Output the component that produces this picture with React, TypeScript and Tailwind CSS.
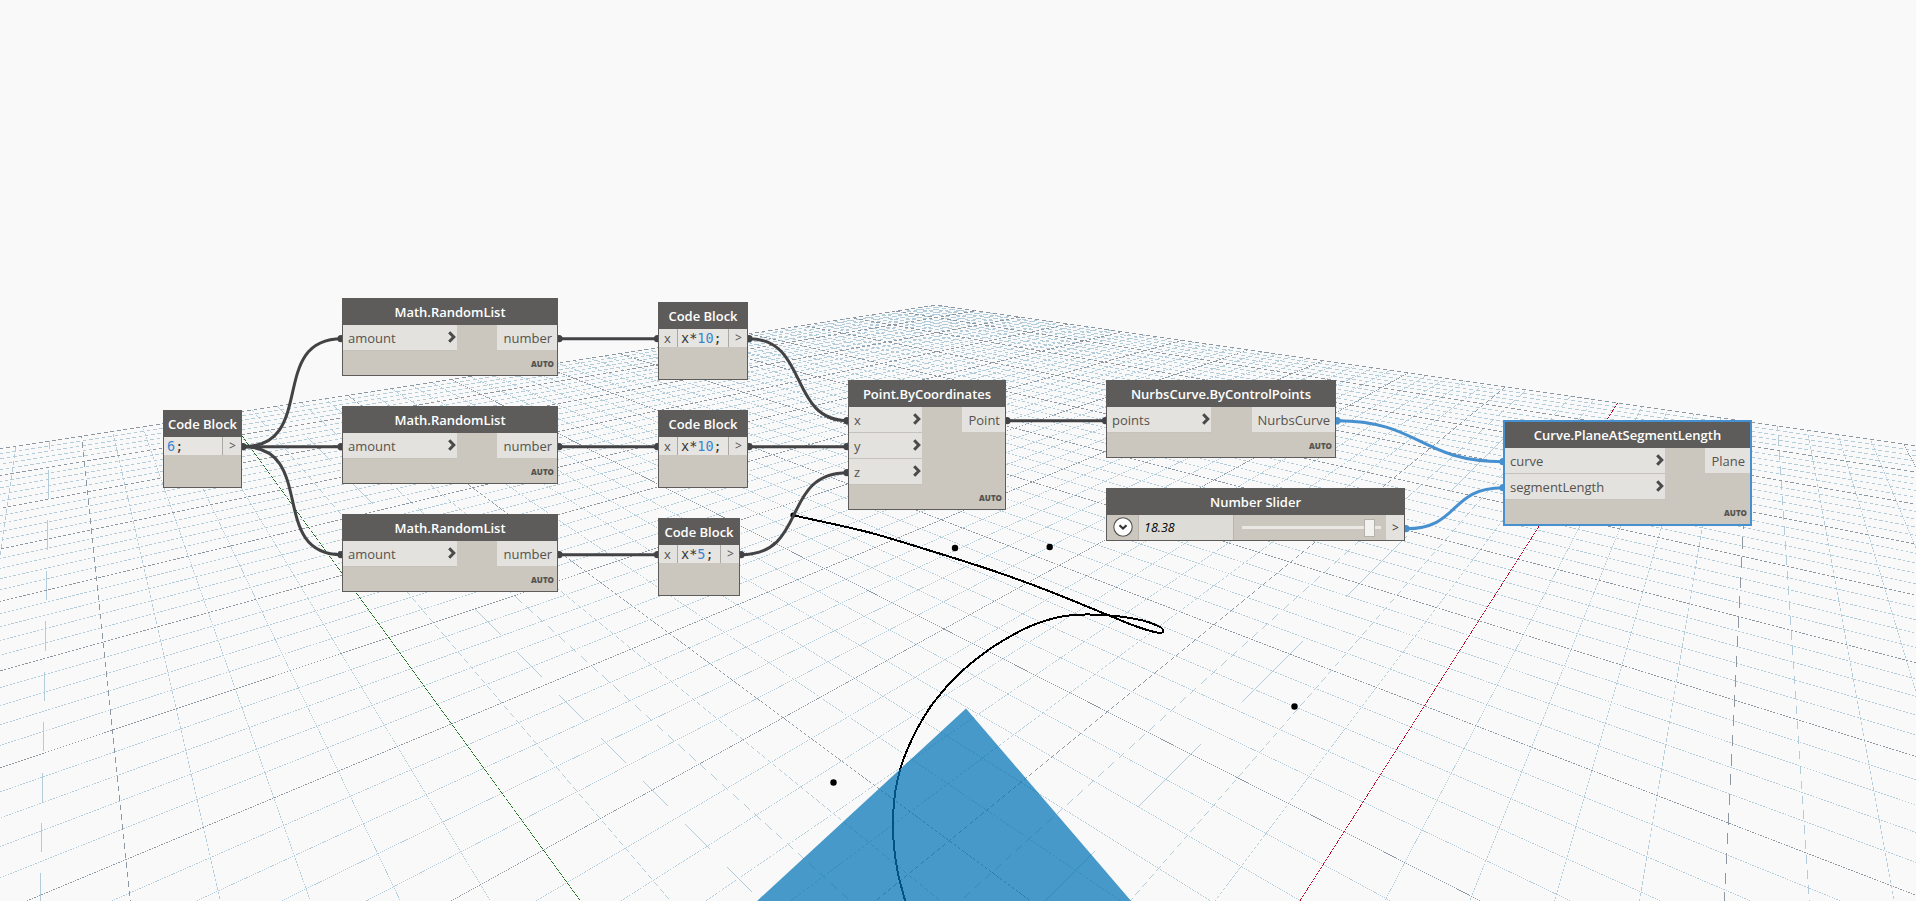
import type { ReactNode } from "react";

type Vec = [number, number, number];

// Homogeneous screen coordinates of the far grid corner and the two vanishing points.
const CORNER: Vec = [936, 305, 1];
const VANISH_A: Vec = [54.6, 178.3, 1];
const VANISH_B: Vec = [1761, 178.3, 1];
const STEP_A = 0.4361 / 50;
const STEP_B = 0.4625 / 50;
const CELLS = 100;

function weight(s: number, t: number) {
  return 1 - s * STEP_A - t * STEP_B;
}

function project(s: number, t: number): [number, number] {
  const w = weight(s, t);
  const axis = (i: number) => (CORNER[i] - s * STEP_A * VANISH_A[i] - t * STEP_B * VANISH_B[i]) / w;
  return [axis(0), axis(1)];
}

// A grid line as a sliver narrower than a pixel, so that it rasterises into dashes.
function gridLine(index: number, alongS: boolean, thickness = 0.58): string {
  const at = (k: number): [number, number] => (alongS ? [k, index] : [index, k]);
  const [s0, t0] = at(0);
  if (weight(s0, t0) < 0.06) return "";
  const step = alongS ? STEP_A : STEP_B;
  const end = Math.min(CELLS, (weight(s0, t0) - 0.05) / step);
  const [s1, t1] = at(end);
  const [x0, y0] = project(s0, t0);
  const [x1, y1] = project(s1, t1);
  const h = thickness / 2;
  const steep = Math.abs(y1 - y0) > Math.abs(x1 - x0);
  // The offset keeps every sliver wound the same way.
  const dx = steep ? (y1 > y0 ? h : -h) : 0;
  const dy = steep ? 0 : x1 > x0 ? -h : h;
  const p = (x: number, y: number) => `${x.toFixed(3)} ${y.toFixed(3)}`;
  return `M${p(x0 + dx, y0 + dy)}L${p(x1 + dx, y1 + dy)}L${p(x1 - dx, y1 - dy)}L${p(x0 - dx, y0 - dy)}Z`;
}

const indexes = Array.from({ length: CELLS + 1 }, (_, i) => i);
const minor = indexes.filter((i) => i % 5 !== 0);
const major = indexes.filter((i) => i % 5 === 0 && i !== 50);
const lines = (list: number[]) => list.map((i) => gridLine(i, true) + gridLine(i, false)).join("");

const CURVE: [number, number][] = [
  [792, 515], [868.6, 532.3], [925.7, 549.3], [991, 570], [1048, 590.7], [1109, 615.5], [1138, 627], [1158, 632.7],
  [1163.5, 630.8], [1158, 626], [1142, 620.3], [1113.5, 615.8], [1085, 614.5], [1060, 616.8], [1032, 625.5],
  [1011, 636], [987, 651], [958.4, 674.5], [934, 702], [917.6, 728], [905.8, 753.3], [900, 770], [895, 793.3],
  [893, 820], [894, 846.7], [898, 873.3], [905.5, 902],
];

function smooth(points: [number, number][]): string {
  let d = `M${points[0][0]} ${points[0][1]}`;
  for (let i = 0; i < points.length - 1; i++) {
    const a = points[Math.max(0, i - 1)];
    const b = points[i];
    const c = points[i + 1];
    const e = points[Math.min(points.length - 1, i + 2)];
    // Limit the tangents to a third of the span they belong to.
    const span = Math.hypot(c[0] - b[0], c[1] - b[1]);
    const tb = Math.hypot(c[0] - a[0], c[1] - a[1]) || 1;
    const tc = Math.hypot(e[0] - b[0], e[1] - b[1]) || 1;
    const k = span / 3;
    d += `C${b[0] + ((c[0] - a[0]) / tb) * k} ${b[1] + ((c[1] - a[1]) / tb) * k} ${c[0] - ((e[0] - b[0]) / tc) * k} ${c[1] - ((e[1] - b[1]) / tc) * k} ${c[0]} ${c[1]}`;
  }
  return d;
}

function Viewport() {
  return (
    <svg className="absolute inset-0 block" width="1916" height="901" viewBox="0 0 1916 901" fill="none">
      <g shapeRendering="crispEdges">
        <path d={lines(minor)} fill="#b3ccda" />
        <path d={lines(major)} fill="#8d97a2" />
        <path d={gridLine(50, true, 0.7)} fill="#166b16" />
        <path d={gridLine(50, false, 0.7)} fill="#b8001f" />
      </g>
      <path shapeRendering="crispEdges" d={smooth(CURVE)} stroke="#000" strokeWidth="2" />
      <g fill="#000">
        <circle cx="793" cy="515" r="2.6" />
        <circle cx="955" cy="548" r="3.2" />
        <circle cx="1049.700" cy="547" r="3.2" />
        <circle cx="1294.500" cy="706.500" r="3.2" />
        <circle cx="833.500" cy="782.500" r="3.2" />
      </g>
      <path d="M966 708.500L1131.500 901.500H756.500Z" fill="#0073b5" fillOpacity="0.72" />
    </svg>
  );
}

function Wires() {
  return (
    <svg className="absolute inset-0 block" width="1916" height="901" viewBox="0 0 1916 901" fill="none">
      <g stroke="#434345" strokeWidth="3">
        <path d="M243 446.700C318 446.700 267 338.700 342 338.700" />
        <path d="M243 446.700H342" />
        <path d="M243 446.700C318 446.700 267 554.700 342 554.700" />
        <path d="M559 338.700H658M559 446.700H658M559 554.700H658" />
        <path d="M749 338.700C809 338.700 788 420.700 848 420.700" />
        <path d="M749 446.700H848" />
        <path d="M741 554.700C809 554.700 780 472.700 848 472.700" />
        <path d="M1007 420.700H1106" />
      </g>
      <g stroke="#4690d0" strokeWidth="3">
        <path d="M1337 420.700C1420 420.700 1420 461.700 1503 461.700" />
        <path d="M1406 528.700C1460 528.700 1449 487.700 1503 487.700" />
      </g>
      <g fill="#434345">
        {[
          [243, 446.7], [341, 338.7], [341, 446.7], [341, 554.7], [559, 338.7], [559, 446.7], [559, 554.7],
          [657.5, 338.7], [657.5, 446.7], [657.5, 554.7], [749, 338.7], [749, 446.7], [741, 554.7],
          [847, 420.7], [847, 446.7], [847, 472.7], [1007, 420.7], [1105.5, 420.7],
        ].map(([x, y]) => (
          <circle key={`${x}-${y}`} cx={x} cy={y} r="3.6" />
        ))}
      </g>
      <g fill="#4690d0">
        <circle cx="1337" cy="420.700" r="3.600" />
        <circle cx="1406" cy="528.700" r="3.600" />
        <circle cx="1503" cy="461.700" r="3.600" />
        <circle cx="1503" cy="487.700" r="3.600" />
      </g>
    </svg>
  );
}

function Node({ title, className, children, selected = false }: { title: string; className: string; children: ReactNode; selected?: boolean }) {
  return (
    <section
      className={`absolute flex flex-col bg-[#cbc6be] ${selected ? "border-2 border-[#4690d0]" : "border border-[#5e5c5a]"} ${className}`}
    >
      <h2 className="flex h-[26px] shrink-0 items-center justify-center bg-[#5e5c5a] pt-px text-[13px] leading-none font-semibold whitespace-nowrap text-white">
        {title}
      </h2>
      {children}
    </section>
  );
}

function Chevron() {
  return (
    <svg className="mt-[-2px] block" width="8" height="12" viewBox="0 0 8 12" fill="none">
      <path d="M1.200 1.200L5.800 6L1.200 10.800" stroke="#4a4a4a" strokeWidth="3" />
    </svg>
  );
}

function Auto() {
  return <div className="pr-[3px] text-right text-[8px] leading-[10px] font-extrabold text-[#55534f]">AUTO</div>;
}

function Ports({ inputs, output, className }: { inputs: string[]; output: string; className: string }) {
  return (
    <div className="flex flex-1 items-start justify-between text-[13px] leading-[27px] text-[#55534f]">
      <div className={`flex flex-col gap-px ${className}`}>
        {inputs.map((name) => (
          <div key={name} className="flex h-[25px] items-center justify-between bg-[#e4e2de] pr-px pl-[5px] shadow-[0_1px_0_#c5c2bc]">
            <span className="h-[25px]">{name}</span>
            <Chevron />
          </div>
        ))}
      </div>
      <div className="h-[25px] bg-[#e4e2de] pr-[5px] pl-[6px]">{output}</div>
    </div>
  );
}

function FunctionNode({ title, className, inputs, output, portWidth, selected }: { title: string; className: string; inputs: string[]; output: string; portWidth: string; selected?: boolean }) {
  return (
    <Node title={title} className={`pb-[6px] ${className}`} selected={selected}>
      <Ports inputs={inputs} output={output} className={portWidth} />
      <Auto />
    </Node>
  );
}

function CodeBlock({ className, input, before, value }: { className: string; input?: string; before?: string; value: string }) {
  return (
    <Node title="Code Block" className={className}>
      <div className="flex h-[18px] bg-[#e4e2de] text-[13px] leading-[19px] text-[#55534f]">
        {input && <div className="w-[19px] shrink-0 border-r border-[#aaa8a4] pl-[5px]">{input}</div>}
        <div className="flex-1 bg-[#e7e5e2] pl-[3px] font-['DejaVu_Sans_Mono',monospace] text-[13.5px] leading-[19px] text-[#333]">
          {before}
          <span className="text-[#3a86d0]">{value}</span>;
        </div>
        <div className="w-[19px] shrink-0 border-l border-[#aaa8a4] pl-[6px] text-[12px] leading-[18px]">&gt;</div>
      </div>
    </Node>
  );
}

export default function App() {
  return (
    <main className="relative h-[901px] w-[1916px] overflow-hidden bg-[#f9f9f9] font-['Open_Sans','Noto_Sans',sans-serif]">
      <Viewport />
      <Wires />

      <CodeBlock className="top-[410px] left-[163px] h-[78px] w-[79px]" value="6" />
      <FunctionNode title="Math.RandomList" className="top-[298px] left-[342px] h-[78px] w-[216px]" inputs={["amount"]} output="number" portWidth="w-[114px]" />
      <FunctionNode title="Math.RandomList" className="top-[406px] left-[342px] h-[78px] w-[216px]" inputs={["amount"]} output="number" portWidth="w-[114px]" />
      <FunctionNode title="Math.RandomList" className="top-[514px] left-[342px] h-[78px] w-[216px]" inputs={["amount"]} output="number" portWidth="w-[114px]" />

      <CodeBlock className="top-[302px] left-[658px] h-[78px] w-[90px]" input="x" before="x*" value="10" />
      <CodeBlock className="top-[410px] left-[658px] h-[78px] w-[90px]" input="x" before="x*" value="10" />
      <CodeBlock className="top-[518px] left-[658px] h-[78px] w-[82px]" input="x" before="x*" value="5" />

      <FunctionNode title="Point.ByCoordinates" className="top-[380px] left-[848px] h-[130px] w-[158px]" inputs={["x", "y", "z"]} output="Point" portWidth="w-[73px]" />
      <FunctionNode title="NurbsCurve.ByControlPoints" className="top-[380px] left-[1106px] h-[78px] w-[230px]" inputs={["points"]} output="NurbsCurve" portWidth="w-[104px]" />

      <Node title="Number Slider" className="top-[488px] left-[1106px] h-[53px] w-[299px]">
        <div className="flex h-[25px] items-stretch">
          <div className="flex w-[31px] items-center justify-center pb-[2px]">
            <svg width="20" height="20" viewBox="0 0 20 20" fill="none">
              <circle cx="10" cy="10" r="9.200" fill="#fff" stroke="#55534f" strokeWidth="1.100" />
              <path d="M6.500 8.300L10 11.600L13.500 8.300" stroke="#333" strokeWidth="2.200" />
            </svg>
          </div>
          <div className="w-[96px] border-x border-[#b9b5ae] bg-[#dedcd7] pl-[5px] text-[12.5px] leading-[25px] text-black italic">18.38</div>
          <div className="flex flex-1 items-center pr-[5px] pl-[8px]">
            <div className="flex h-[3px] flex-1 items-center justify-end bg-[#e9e8e5] pr-[6px]">
              <div className="h-[18px] w-[11px] border border-[#b5b2ac] bg-[#f3f2f1]" />
            </div>
          </div>
          <div className="w-[18px] bg-[#e4e2de] pl-[6px] text-[12px] leading-[25px] text-[#333]">&gt;</div>
        </div>
      </Node>

      <FunctionNode title="Curve.PlaneAtSegmentLength" className="top-[420px] left-[1503px] h-[106px] w-[249px]" inputs={["curve", "segmentLength"]} output="Plane" portWidth="w-[160px]" selected />
    </main>
  );
}
